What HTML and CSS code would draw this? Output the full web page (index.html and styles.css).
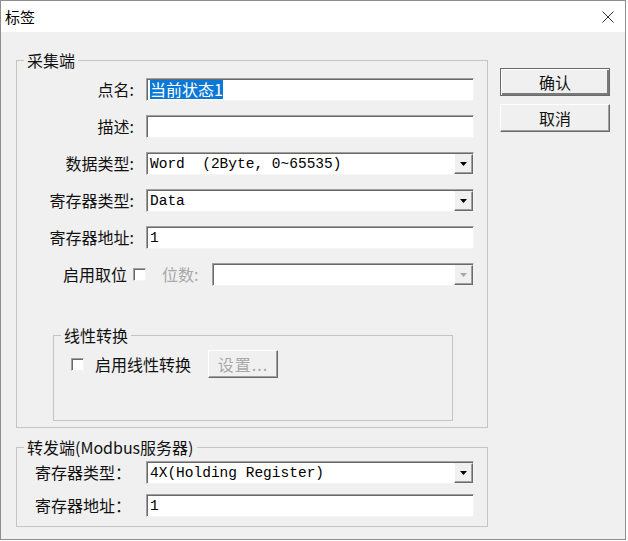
FILE: index.html
```html
<!DOCTYPE html>
<html lang="zh-CN">
<head>
<meta charset="utf-8">
<title>标签</title>
<link rel="stylesheet" href="styles.css">
</head>
<body>
<div class="window">
  <div class="titlebar">
    <span class="title">标签</span>
    <svg class="close" width="12" height="12" viewBox="0 0 12 12"><path d="M0.5 0.5L11.5 11.5M11.5 0.5L0.5 11.5" stroke="#333" stroke-width="1" fill="none"/></svg>
  </div>
  <div class="body">
    <div class="left">
      <fieldset class="group g-collect">
        <legend>采集端</legend>
        <div class="form">
          <span class="lbl">点名:</span>
          <div class="field"><span class="sel">当前状态1</span></div>
          <span class="lbl">描述:</span>
          <div class="field"></div>
          <span class="lbl">数据类型:</span>
          <div class="field combo"><span class="val">Word&nbsp;&nbsp;(2Byte, 0~65535)</span><span class="drop"><svg width="7" height="4" viewBox="0 0 7 4"><polygon points="0,0 7,0 3.5,4" fill="#000"/></svg></span></div>
          <span class="lbl">寄存器类型:</span>
          <div class="field combo"><span class="val">Data</span><span class="drop"><svg width="7" height="4" viewBox="0 0 7 4"><polygon points="0,0 7,0 3.5,4" fill="#000"/></svg></span></div>
          <span class="lbl">寄存器地址:</span>
          <div class="field"><span class="val">1</span></div>
          <div class="bitrow">
            <span class="bitlbl">启用取位</span>
            <span class="check bitcheck"></span>
            <span class="dislbl">位数:</span>
            <div class="field combo bitsel"><span class="val"></span><span class="drop"><svg width="7" height="4" viewBox="0 0 7 4"><polygon points="0,0 7,0 3.5,4" fill="#a8a8a8"/></svg></span></div>
          </div>
        </div>
        <fieldset class="group g-linear">
          <legend>线性转换</legend>
          <div class="linrow">
            <span class="check"></span>
            <span class="lintext">启用线性转换</span>
            <span class="btn btn-dis">设置...</span>
          </div>
        </fieldset>
      </fieldset>
      <fieldset class="group g-forward">
        <legend>转发端(Modbus服务器)</legend>
        <div class="form form2">
          <span class="lbl2">寄存器类型：</span>
          <div class="field combo"><span class="val">4X(Holding Register)</span><span class="drop"><svg width="7" height="4" viewBox="0 0 7 4"><polygon points="0,0 7,0 3.5,4" fill="#000"/></svg></span></div>
          <span class="lbl2">寄存器地址：</span>
          <div class="field"><span class="val">1</span></div>
        </div>
      </fieldset>
    </div>
    <div class="right">
      <div class="btn btn-default">确认</div>
      <div class="btn">取消</div>
    </div>
  </div>
</div>
</body>
</html>
```

FILE: styles.css
```css
* { box-sizing: border-box; }
html, body { margin: 0; padding: 0; }
body {
  width: 628px;
  height: 541px;
  overflow: hidden;
  background: #ffffff;
  font-family: "Noto Sans CJK SC", "Noto Sans", sans-serif;
  color: #111;
}
.window {
  width: 626px;
  height: 540px;
  border: 1px solid #8e8e8e;
  background: #f0f0f0;
  display: flex;
  flex-direction: column;
}
.titlebar {
  height: 31px;
  flex: none;
  background: #ffffff;
  display: flex;
  align-items: center;
  justify-content: space-between;
  padding: 0 11px 0 4px;
  font-size: 15px;
}
.title { line-height: 20px; color: #000; }
.close { display: block; }
.body {
  display: flex;
  padding: 19px 0 0 15px;
  gap: 12px;
}
.left {
  width: 472px;
  display: flex;
  flex-direction: column;
  gap: 10px;
}
.right {
  display: flex;
  flex-direction: column;
  gap: 8px;
  margin-top: 17px;
}
fieldset.group {
  margin: 0;
  padding: 0;
  border: 1px solid #c4c4c4;
  min-width: 0;
}
.group legend {
  margin-left: 7px;
  padding: 0 3px;
  font-size: 16px;
  line-height: 18px;
  color: #111;
}
.form {
  display: grid;
  grid-template-columns: 121px 328px;
  grid-auto-rows: 23px;
  column-gap: 8px;
  row-gap: 14px;
  padding-top: 9px;
}
.lbl {
  text-align: right;
  font-size: 16px;
  line-height: 23px;
  padding-right: 4px;
  white-space: nowrap;
}
.lbl2 {
  text-align: left;
  font-size: 16px;
  line-height: 23px;
  padding-left: 18px;
  white-space: nowrap;
}
.field {
  background: #ffffff;
  border: 1px solid;
  border-color: #a0a0a0 #f4f4f4 #f4f4f4 #a0a0a0;
  box-shadow: inset 1px 1px 0 #6a6a6a;
  display: flex;
  align-items: center;
  padding-left: 3px;
  height: 23px;
  font-family: "Liberation Mono", "DejaVu Sans Mono", monospace;
  font-size: 14.5px;
  color: #000;
  white-space: pre;
}
.sel {
  font-family: "Noto Sans CJK SC", "Noto Sans", sans-serif;
  font-size: 16px;
  line-height: 19px;
  background: #0a78d7;
  color: #ffffff;
}
.combo { padding-right: 0; }
.combo .val { flex: 1; }
.drop {
  align-self: stretch;
  width: 19px;
  margin: 1px 0 0 0;
  background: #f0f0f0;
  border: 1px solid;
  border-color: #f0f0f0 #6a6a6a #6a6a6a #ffffff;
  box-shadow: inset -1px -1px 0 #a0a0a0;
  display: flex;
  align-items: center;
  justify-content: center;
}
.drop svg { display: block; }
.bitrow {
  grid-column: 1 / -1;
  display: flex;
  align-items: center;
  padding-left: 46px;
}
.bitlbl {
  font-size: 16px;
  line-height: 23px;
  white-space: nowrap;
}
.check {
  width: 13px;
  height: 13px;
  flex: none;
  background: #ffffff;
  border: 1px solid;
  border-color: #a0a0a0 #f4f4f4 #f4f4f4 #a0a0a0;
  box-shadow: inset 1px 1px 0 #6a6a6a;
}
.bitcheck { margin-left: 6px; }
.dislbl {
  margin-left: 16px;
  font-size: 16px;
  line-height: 23px;
  color: #a8a8a8;
  white-space: nowrap;
}
.bitsel {
  flex: 1;
  margin-left: 14px;
}
fieldset.g-linear {
  margin: 40px 0 6px 36px;
  width: 400px;
  height: 95px;
}
.linrow {
  display: flex;
  align-items: center;
  padding: 6px 0 0 17px;
}
.lintext {
  margin-left: 11px;
  font-size: 16px;
  line-height: 28px;
  white-space: nowrap;
}
.btn {
  display: flex;
  align-items: center;
  justify-content: center;
  width: 110px;
  height: 28px;
  font-size: 16px;
  color: #111;
  background: #f0f0f0;
  border: 1px solid;
  border-color: #ffffff #6a6a6a #6a6a6a #ffffff;
  box-shadow: inset -1px -1px 0 #a0a0a0;
}
.btn-default {
  border: 1px solid #6a6a6a;
  box-shadow: inset 1px 1px 0 #ffffff, inset -2px -2px 0 #7a7a7a;
}
.btn-dis {
  margin-left: 17px;
  width: 70px;
  color: #a8a8a8;
  letter-spacing: 1px;
}
fieldset.g-forward {
  height: 89px;
}
.form2 {
  padding-top: 5px;
  row-gap: 10px;
}
```
